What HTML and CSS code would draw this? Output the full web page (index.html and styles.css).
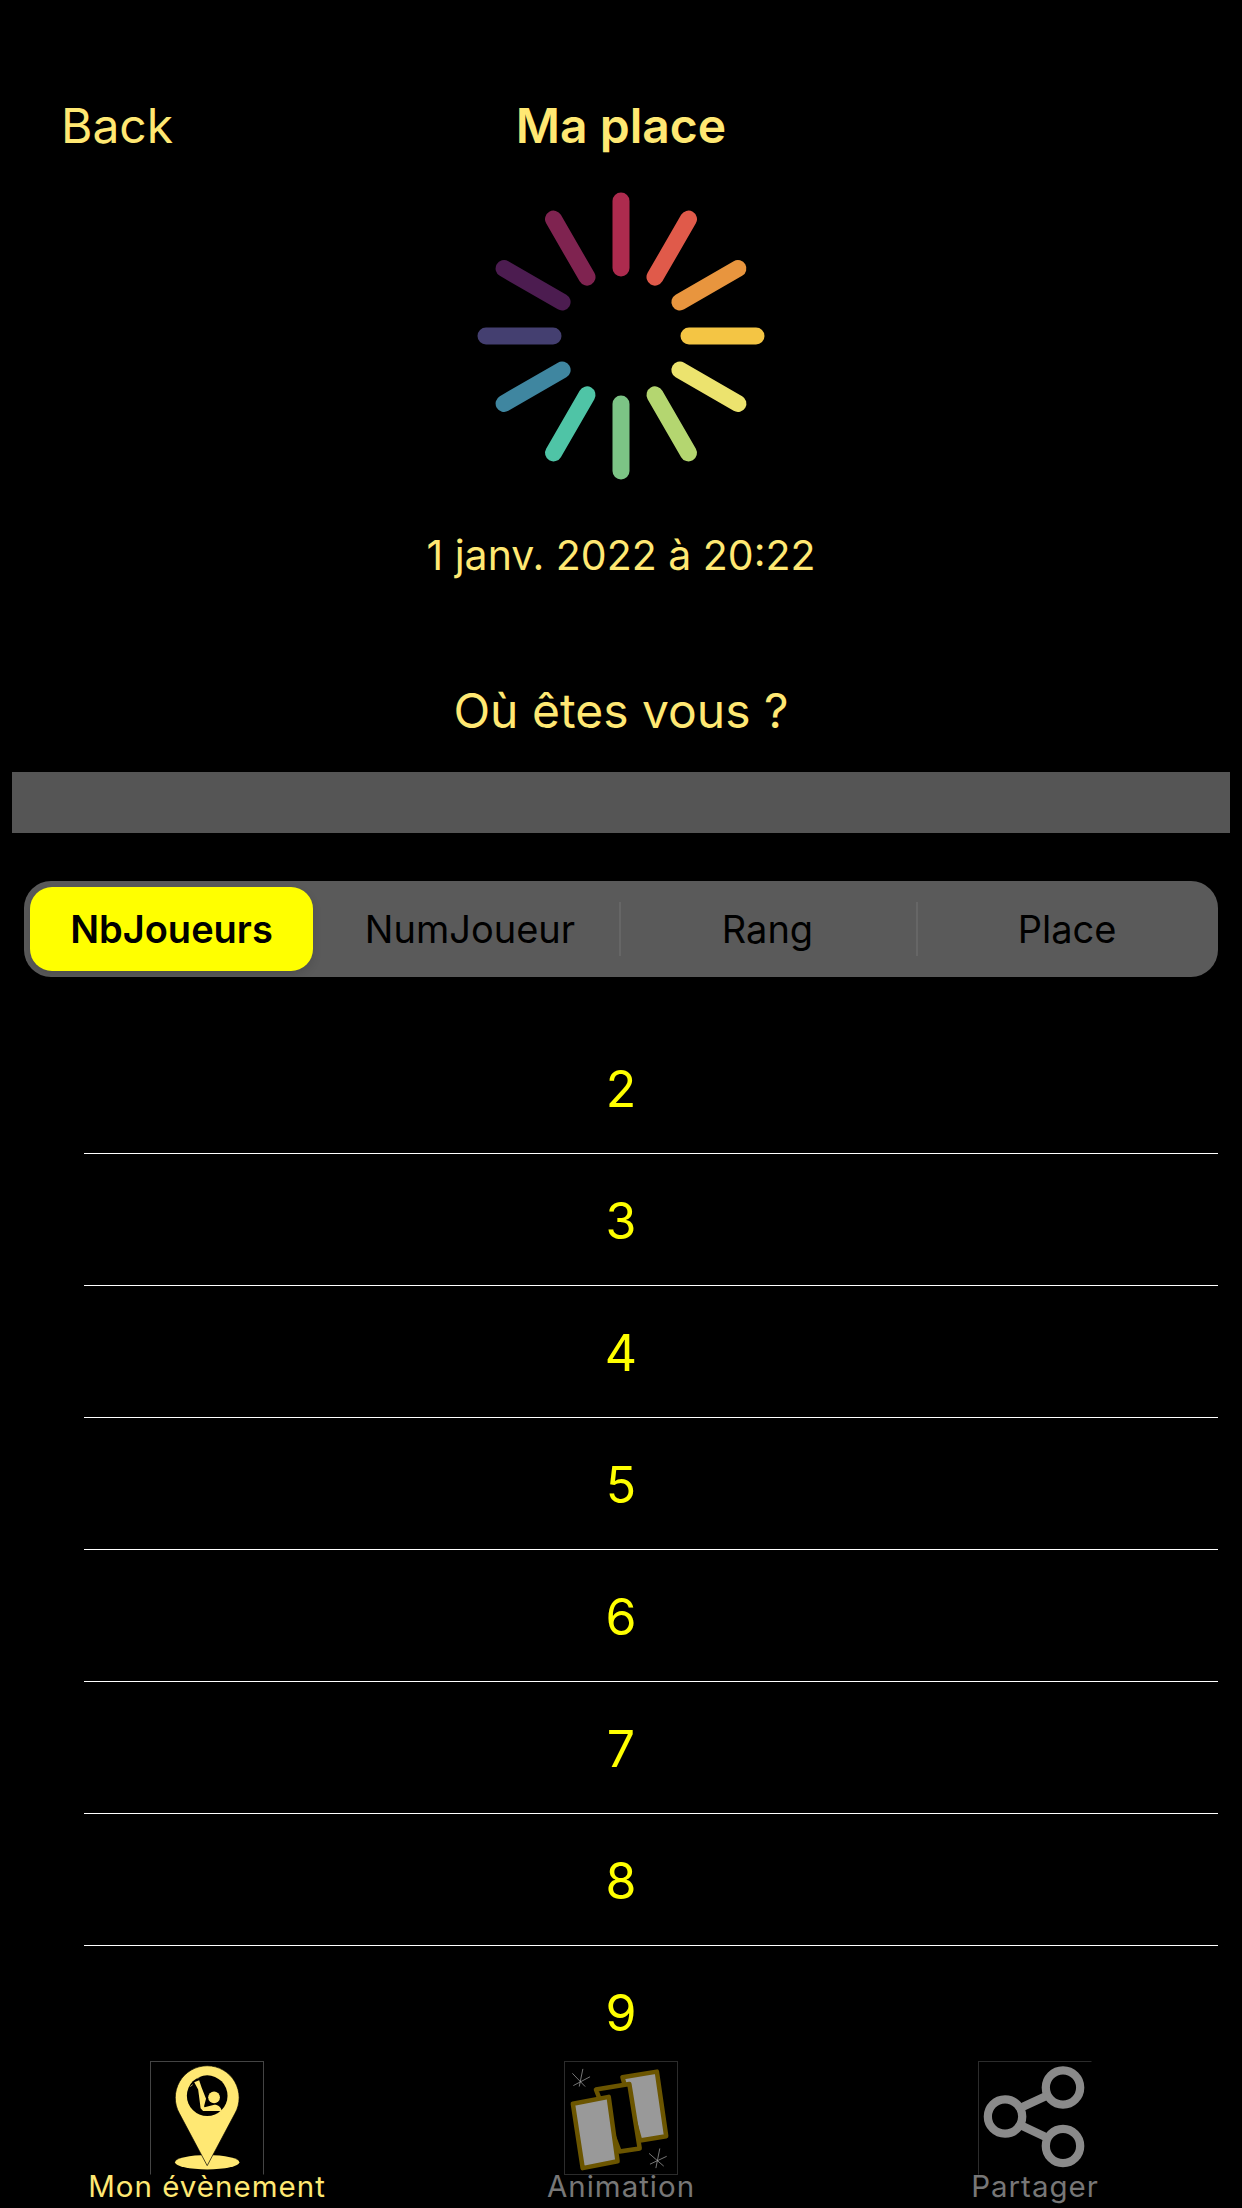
FILE: index.html
```html
<!DOCTYPE html>
<html lang="fr">
<head>
<meta charset="utf-8">
<title>Ma place</title>
<link rel="stylesheet" href="styles.css">
</head>
<body>
<div class="screen">
  <header class="nav">
    <a class="nav-back">Back</a>
    <h1 class="nav-title">Ma place</h1>
  </header>
  <div class="spinner-wrap">
    <svg class="spinner" viewBox="-145 -145 290 290" stroke-width="17" stroke-linecap="round" aria-hidden="true">
      <line x1="0" y1="-135" x2="0" y2="-68" stroke="#ad2b4e"/>
      <line x1="0" y1="-135" x2="0" y2="-68" stroke="#e05a4a" transform="rotate(30)"/>
      <line x1="0" y1="-135" x2="0" y2="-68" stroke="#e8953e" transform="rotate(60)"/>
      <line x1="0" y1="-135" x2="0" y2="-68" stroke="#f4c544" transform="rotate(90)"/>
      <line x1="0" y1="-135" x2="0" y2="-68" stroke="#ece36e" transform="rotate(120)"/>
      <line x1="0" y1="-135" x2="0" y2="-68" stroke="#b4d670" transform="rotate(150)"/>
      <line x1="0" y1="-135" x2="0" y2="-68" stroke="#7cc485" transform="rotate(180)"/>
      <line x1="0" y1="-135" x2="0" y2="-68" stroke="#4fc4a6" transform="rotate(210)"/>
      <line x1="0" y1="-135" x2="0" y2="-68" stroke="#3f86a0" transform="rotate(240)"/>
      <line x1="0" y1="-135" x2="0" y2="-68" stroke="#443f70" transform="rotate(270)"/>
      <line x1="0" y1="-135" x2="0" y2="-68" stroke="#4c1c50" transform="rotate(300)"/>
      <line x1="0" y1="-135" x2="0" y2="-68" stroke="#7f2350" transform="rotate(330)"/>
    </svg>
  </div>
  <p class="date">1 janv. 2022 à 20:22</p>
  <p class="question">Où êtes vous ?</p>
  <div class="grey-bar"></div>
  <div class="segments">
    <div class="segment segment-active">NbJoueurs</div>
    <div class="segment">NumJoueur</div>
    <div class="segment segment-sep">Rang</div>
    <div class="segment segment-sep">Place</div>
  </div>
  <div class="list">
    <div class="row">2</div><div class="rule"></div>
    <div class="row">3</div><div class="rule"></div>
    <div class="row">4</div><div class="rule"></div>
    <div class="row">5</div><div class="rule"></div>
    <div class="row">6</div><div class="rule"></div>
    <div class="row">7</div><div class="rule"></div>
    <div class="row">8</div><div class="rule"></div>
    <div class="row">9</div>
  </div>
  <nav class="tabs">
    <div class="tab tab-active">
      <svg class="tab-icon icon-pin" viewBox="0 0 113 114" aria-hidden="true">
        <ellipse cx="56.7" cy="102" rx="32.7" ry="7.3" fill="#ffe873"/>
        <path d="M56.7 105.5 L28.5 52.5 A32.5 32.5 0 1 1 84.9 52.5 Z" fill="#ffe873" stroke="#000" stroke-width="0.7" stroke-linejoin="round"/>
        <circle cx="56.7" cy="34.3" r="20.7" fill="#000"/>
        <circle cx="63.7" cy="36" r="6" fill="#ffe873"/>
        <path d="M43.5 20.5 L48.5 18.5 L51 26 L55.5 37.5 L53.5 45 L54 46 L64 43.5 C68 43.5 71 46 71.5 50 L52.5 50 L50 47 L47.5 28 Z" fill="#ffe873"/>
        <path d="M47 17 L49.5 14.5 M42 23 L39.5 25" stroke="#ffe873" stroke-width="0.7"/>
      </svg>
      <span class="tab-label">Mon évènement</span>
    </div>
    <div class="tab">
      <svg class="tab-icon icon-anim" viewBox="0 0 113 114" aria-hidden="true">
        <path d="M58 15.5 L93 9.8 L102.5 75.5 L76 80 Z" fill="#999" stroke="#6b5500" stroke-width="4.6" stroke-linejoin="round"/>
        <path d="M31 28 L65 22.5 L75.5 88 L55 91 Z" fill="#000" stroke="#6b5500" stroke-width="4.6" stroke-linejoin="round"/>
        <path d="M7.5 42.5 L44 35.5 L53 101 L17.5 108 Z" fill="#999" stroke="#6b5500" stroke-width="4.6" stroke-linejoin="round"/>
        <path d="M7 11.5 L20 25 M17.7 7 L14 25 M8 24 L25 15" stroke="#aaa" stroke-width="0.7" fill="none"/>
        <path d="M85 93 L100 106 M96 88 L92 108 M86 104 L103 96" stroke="#aaa" stroke-width="0.7" fill="none"/>
      </svg>
      <span class="tab-label">Animation</span>
    </div>
    <div class="tab">
      <svg class="tab-icon icon-share" viewBox="0 0 113 114" aria-hidden="true">
        <g fill="none" stroke="#8a8a8a" stroke-width="8.4">
          <circle cx="85" cy="26" r="17.5"/>
          <circle cx="26" cy="55.5" r="17.5"/>
          <circle cx="85" cy="85.5" r="17.5"/>
          <path d="M42 46.5 L69 34 M42 64.5 L69 77"/>
        </g>
      </svg>
      <span class="tab-label">Partager</span>
    </div>
  </nav>
</div>
</body>
</html>
```

FILE: styles.css
```css
* {
  box-sizing: border-box;
}

html,
body {
  margin: 0;
  padding: 0;
  background: #000;
}

.screen {
  display: flex;
  flex-direction: column;
  width: 1242px;
  height: 2208px;
  overflow: hidden;
  background: #000;
  font-family: Inter, "Liberation Sans", sans-serif;
  color: #ffe873;
}

.nav {
  position: relative;
  height: 74px;
  margin-top: 89px;
  display: flex;
  align-items: center;
  justify-content: center;
}

.nav-back {
  position: absolute;
  left: 61px;
  top: 0;
  font-size: 48px;
  line-height: 74px;
}

.nav-title {
  margin: 0;
  font-size: 48px;
  font-weight: 600;
  line-height: 74px;
}

.spinner-wrap {
  display: flex;
  justify-content: center;
  margin-top: 28px;
  height: 290px;
}

.spinner {
  width: 290px;
  height: 290px;
  filter: blur(0.5px);
}

.date {
  margin: 49px 0 0;
  height: 50px;
  font-size: 41px;
  line-height: 50px;
  text-align: center;
}

.question {
  margin: 101px 0 0;
  height: 60px;
  font-size: 48px;
  line-height: 60px;
  text-align: center;
}

.grey-bar {
  height: 61px;
  margin: 31px 12px 0;
  background: #555;
}

.segments {
  display: grid;
  grid-template-columns: 291px 298px 297px 1fr;
  height: 96px;
  margin: 48px 24px 0;
  padding: 6px 0 6px 6px;
  border-radius: 27px;
  background: #5a5a5a;
}

.segment {
  position: relative;
  display: flex;
  align-items: center;
  justify-content: center;
  color: #000;
  font-size: 38px;
}

.segment-active {
  margin-right: 8px;
  border-radius: 22px;
  background: #ff0;
  font-weight: 600;
  box-shadow: 0 4px 10px rgba(0, 0, 0, 0.12);
}

.segment-sep::before {
  content: "";
  position: absolute;
  left: 0;
  top: 15px;
  bottom: 15px;
  width: 2px;
  background: #666;
}

.list {
  flex: 1;
  min-height: 0;
  margin-top: 45px;
  overflow: hidden;
}

.row {
  display: flex;
  align-items: center;
  justify-content: center;
  height: 131px;
  padding-top: 2px;
  color: #ff0;
  font-size: 50px;
}

.rule {
  height: 1px;
  margin: 0 24px 0 84px;
  background: #fff;
}

.tabs {
  display: grid;
  grid-template-columns: repeat(3, 1fr);
  height: 147px;
  color: #777;
}

.tab {
  display: flex;
  flex-direction: column;
  align-items: center;
}

.tab-active {
  color: #ffe873;
}

.tab-icon {
  display: block;
  flex: none;
  width: 114px;
  height: 114px;
  border: 1px solid transparent;
}

.icon-pin {
  border-top-color: #444;
  border-left-color: #444;
  border-right-color: #444;
}

.icon-anim {
  border-color: #2c2c2c;
}

.icon-share {
  border-top-color: #2c2c2c;
  border-left-color: #2c2c2c;
}

.tab-label {
  margin-top: -5px;
  font-size: 29.5px;
  line-height: 32px;
  letter-spacing: 1px;
  white-space: nowrap;
}
```
